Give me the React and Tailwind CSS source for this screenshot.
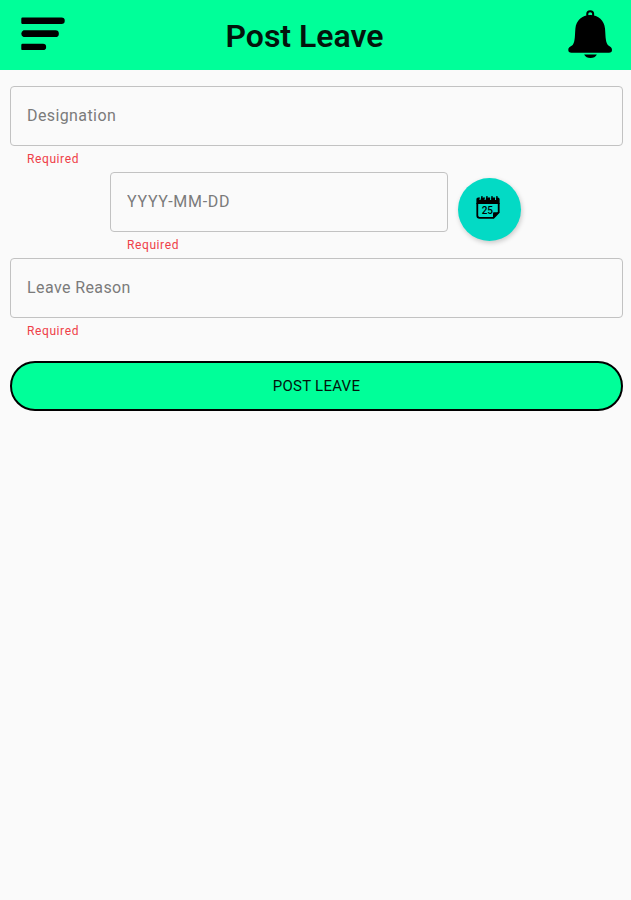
import clsx from 'clsx'

function MenuIcon() {
  return (
    <svg width="44" height="34" viewBox="0 0 44 34" fill="black">
      <path d="M1.5 0.5H40.500a3.250 3.250 0 0 1 0 6.500H1.500Q0.300 7 0.300 5.800V1.700Q0.300 0.500 1.500 0.500Z" />
      <path d="M2.500 13.300H34.500a3.350 3.350 0 0 1 0 6.700H2.500Q0.300 19 0.300 16.700T2.500 13.300Z" />
      <path d="M1.500 26.800H22a3.150 3.150 0 0 1 0 6.300H1.500Q0.300 33.100 0.300 31.900V28Q0.300 26.800 1.500 26.800Z" />
    </svg>
  )
}

function BellIcon() {
  return (
    <svg width="46" height="50" viewBox="0 0 46 50">
      <circle cx="22.200" cy="4.300" r="3" fill="none" stroke="black" strokeWidth="2" />
      <path d="M22.200 5C30.500 5 36.200 10.500 37 18.500C37.600 25 37.300 31 39.500 34.500C41 36.500 44 36.500 44 40C44 42 43 42.700 41 42.700H3.500C1.300 42.700 0.300 42 0.300 40C0.300 36.500 3.500 36.500 5 34.500C7.200 31 6.800 25 7.400 18.500C8.200 10.500 14 5 22.200 5Z" fill="black" />
      <path d="M16.200 44.500H28.800C27 49.300 18 49.300 16.200 44.500Z" fill="black" />
    </svg>
  )
}

function CalendarIcon() {
  return (
    <svg width="24" height="24" viewBox="0 0 24 24">
      <path d="M1.300 7V19.500Q1.300 21.800 3.600 21.800H17.500L22.700 16.500V7" fill="none" stroke="black" strokeWidth="1.800" />
      <path d="M0.400 8V3Q0.400 1.500 2.200 1.500H21.800Q23.600 1.500 23.600 3V8Z" fill="black" />
      <path d="M17 22.500V17.200Q17 16.200 18 16.200H23.500Z" fill="black" />
      <path d="M4.800 0L4 4M9.900 0L9.100 4M14.700 0V4M19.600 0V4" stroke="#03dac5" strokeWidth="1.200" />
      <path d="M6 0L5.500 4M11 0L10.500 4M16 0V4M20.900 0V4" stroke="black" strokeWidth="1.300" />
      <text x="5.700" y="18" fontFamily="Roboto" fontSize="10" fontWeight="500">25</text>
    </svg>
  )
}

function Field({ label, className }) {
  return (
    <div className={clsx('flex flex-col', className)}>
      <input
        placeholder={label}
        className="h-[60px] w-full rounded-[4px] border border-[#c2c2c2] bg-transparent pb-[2px] pl-4 pr-4 text-[16px] tracking-[0.4px] outline-none placeholder:text-[#7b7b7b]"
      />
      <span className="mt-[5px] pl-[17px] text-[12px] leading-[16px] tracking-[0.6px] text-[#ef4048]">Required</span>
    </div>
  )
}

export default function App() {
  return (
    <div className="min-h-screen bg-[#fafafa] font-['Roboto',sans-serif]">
      <header className="flex h-[70px] items-center bg-[#00ff99] pl-[21px] pr-[17px]">
        <button className="w-[46px] pb-[2px]" aria-label="Menu">
          <MenuIcon />
        </button>
        <h1 className="flex-1 pr-[26px] pt-[2px] text-center text-[32px] font-semibold text-[#03140c]">Post Leave</h1>
        <button aria-label="Notifications">
          <BellIcon />
        </button>
      </header>

      <form className="pl-[10px] pr-2 pt-4">
        <Field label="Designation" className="h-[86px]" />
        <div className="flex h-[86px] pl-[100px]">
          <Field label="YYYY-MM-DD" className="w-[338px] [&_input]:tracking-[0.7px]" />
          <button
            type="button"
            aria-label="Pick date"
            className="ml-[10px] mt-[6px] flex size-[63px] items-center justify-center rounded-full bg-[#03dac5] pr-1 pb-1 shadow-[1px_2px_5px_rgba(0,0,0,0.2)]"
          >
            <CalendarIcon />
          </button>
        </div>
        <Field label="Leave Reason" className="h-[103px]" />
        <button
          type="button"
          className="h-[50px] w-full rounded-full border-2 border-black bg-[#00ff99] text-[15px] leading-[20px] font-normal tracking-[0.25px] text-[#03140c]"
        >
          POST LEAVE
        </button>
      </form>
    </div>
  )
}
